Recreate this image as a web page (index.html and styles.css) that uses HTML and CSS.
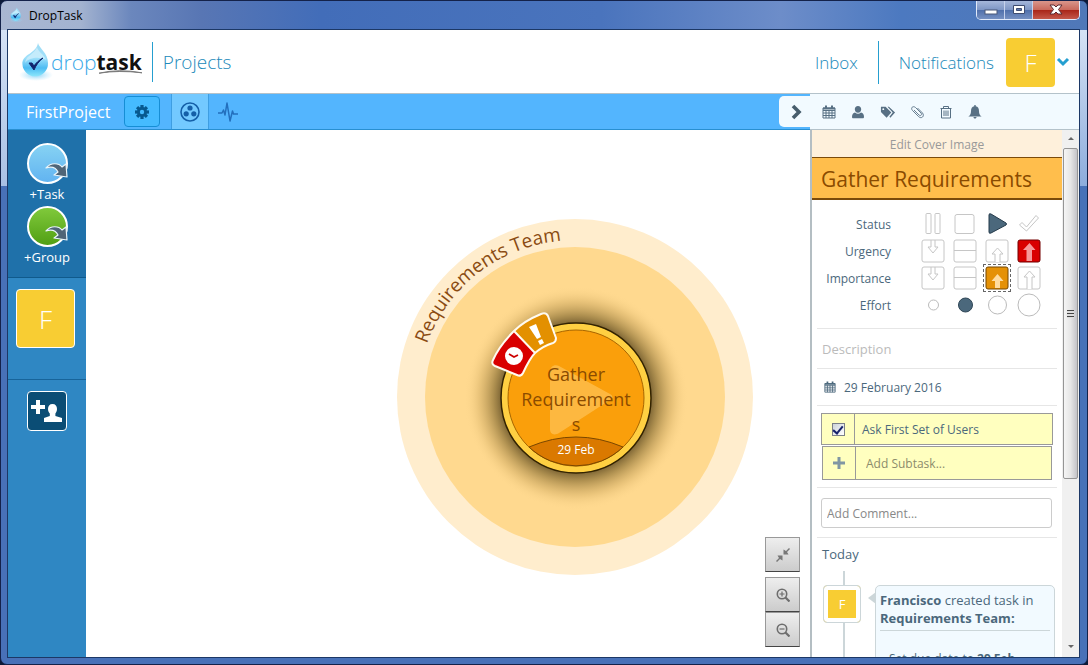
FILE: index.html
```html
<!DOCTYPE html>
<html lang="en">
<head>
<meta charset="utf-8">
<title>DropTask</title>
<link rel="stylesheet" href="styles.css">
</head>
<body>
<svg class="defs" width="0" height="0" aria-hidden="true">
  <defs>
    <linearGradient id="dropFill" x1="0" y1="0" x2="0" y2="1"><stop offset="0" stop-color="#9fdcf5"/><stop offset=".45" stop-color="#9fe0fa"/><stop offset=".75" stop-color="#4dbcf3"/><stop offset="1" stop-color="#8be6fb"/></linearGradient>
    <radialGradient id="glow"><stop offset="0" stop-color="#6fc8f5" stop-opacity=".8"/><stop offset="1" stop-color="#9fdcf8" stop-opacity="0"/></radialGradient>
    <symbol id="drop" viewBox="0 0 34 40">
      <ellipse cx="17" cy="33" rx="17" ry="6" fill="url(#glow)"/>
      <path d="M19 1c1 5 10 10 10 20a12.800 12.800 0 0 1-25.600 1C3 12 17 12 19 1z" fill="url(#dropFill)"/>
      <path d="M18 5c-2 7-11 8-12 16 5-7 17-6 21-3C25 12 19 10 18 5z" fill="#fff" opacity=".4"/>
      <path d="M10 21l5 7c2-5 5-9 9-12-4 2-7 5-9 8l-2-3z" fill="#10246e" stroke="#10246e"/>
    </symbol>
    <symbol id="calendar" viewBox="0 0 14 14"><path d="M1 3h12v10H1zM1 5.500h12M1 8h12M1 10.500h12M4 5v8M7 5v8M10 5v8" fill="none" stroke="currentColor"/><path d="M1 2.500h12v2H1zM3 .5h2v3H3zM9 .5h2v3H9z" fill="currentColor"/></symbol>
    <symbol id="person" viewBox="0 0 14 14"><path d="M7 1c2 0 3.200 1.400 3.200 3.200C10.200 6 9 7.800 7 7.800S3.800 6 3.800 4.200C3.800 2.400 5 1 7 1zM4 7.500c2 1.600 4 1.600 6 0 2 .3 3 2 3 4.500 0 .8-.5 1.300-1.300 1.300H2.300C1.500 13.300 1 12.800 1 12c0-2.500 1-4.200 3-4.500z" fill="currentColor"/></symbol>
    <symbol id="plus" viewBox="0 0 12 12"><path d="M4.500 0h3v4.500H12v3H7.500V12h-3V7.500H0v-3h4.500z" fill="currentColor"/></symbol>
    <symbol id="drag" viewBox="0 0 24 16"><path d="M1 6C6 0 14 1 17 5l4-3 1 13-13-2 4-3C11 6 7 4 1 6z" fill="#4f6577" stroke="#e8f4fa" stroke-width="1.200" stroke-linejoin="round"/></symbol>
    <symbol id="down" viewBox="0 0 24 24"><rect x="1" y="1" width="22" height="22" rx="2" fill="#fff" stroke="#c6c6c6"/><path d="M10 1v7H7l5 6 5-6h-3V1" fill="none" stroke="#c6c6c6"/></symbol>
    <symbol id="level" viewBox="0 0 24 24"><rect x="1" y="1" width="22" height="22" rx="2" fill="#fff" stroke="#c6c6c6"/><path d="M1 11.500h22" stroke="#c6c6c6"/></symbol>
  </defs>
</svg>
<div class="window">
  <div class="titlebar">
    <svg class="app-icon" viewBox="0 0 34 40"><use href="#drop"/></svg>
    <span class="app-name">DropTask</span>
    <div class="window-buttons">
      <button class="wb" aria-label="Minimize"><svg width="14" height="12"><rect x="1" y="6" width="12" height="4" fill="#fff" stroke="#4b5878"/></svg></button>
      <button class="wb" aria-label="Maximize"><svg width="14" height="12"><path d="M1.500 1.500h11v8h-11z" fill="#fff" stroke="#3e4c70"/><path d="M4.500 4.500h5v2h-5z" fill="#5b76ad" stroke="#3e4c70"/></svg></button>
      <button class="wb close" aria-label="Close"><svg width="14" height="12" viewBox="0 0 14 12"><path d="M1 1h4l2 2 2-2h4L9.500 5.500 13 10H9L7 8l-2 2H1l3.500-4.500z" fill="#fff" stroke="#5b2a32"/></svg></button>
    </div>
  </div>
  <div class="client">
    <header class="header">
      <svg class="drop-logo" viewBox="0 0 34 40"><use href="#drop"/></svg>
      <div class="wordmark"><span>drop</span><b>task</b><svg class="swoosh" viewBox="0 0 44 5" preserveAspectRatio="none"><path d="M0 4Q20-2 44 3.500Q20 0 0 4z" fill="#666" stroke="#777"/></svg></div>
      <span class="rule"></span>
      <a class="nav projects" href="#">Projects</a>
      <span class="grow"></span>
      <a class="nav" href="#">Inbox</a>
      <span class="rule rule-tall"></span>
      <a class="nav" href="#">Notifications</a>
      <button class="avatar-menu"><span class="avatar avatar-head">F</span><svg class="chev" width="14" height="10" viewBox="0 0 14 10"><path d="M2 2l5 5 5-5" fill="none" stroke="#259fd0" stroke-width="3"/></svg></button>
    </header>
    <div class="bars">
      <div class="project-bar">
        <span class="project-name">FirstProject</span>
        <button class="gear" aria-label="Project settings"><svg width="16" height="16" viewBox="-8 -8 16 16" fill="#07598f"><g><rect x="-1.600" y="-7" width="3.200" height="14"/><rect x="-7" y="-1.600" width="14" height="3.200"/><rect x="-1.600" y="-7" width="3.200" height="14" transform="rotate(45)"/><rect x="-1.600" y="-7" width="3.200" height="14" transform="rotate(-45)"/></g><circle r="5"/><circle r="2.200" fill="#45bbff"/></svg></button>
        <button class="view active" aria-label="Circles view"><svg width="22" height="22" viewBox="0 0 22 22" fill="#145fa8"><circle cx="11" cy="11" r="9" fill="none" stroke="#145fa8" stroke-width="1.600"/><circle cx="11" cy="7" r="2.600"/><circle cx="7.200" cy="12.800" r="2.600"/><circle cx="14.800" cy="12.800" r="2.600"/></svg></button>
        <button class="view" aria-label="Activity"><svg width="20" height="20" viewBox="0 0 20 20" fill="none" stroke="#236fbd" stroke-width="1.500" stroke-linejoin="round"><path d="M0 11h4l1.500-3 1.500 5L9 1l3 18 2.500-10 1 3H20"/></svg></button>
        <button class="collapse" aria-label="Collapse panel"><svg width="12" height="16" viewBox="0 0 12 16"><path d="M2 2l6 6-6 6" fill="none" stroke="#475d6c" stroke-width="3.600"/></svg></button>
      </div>
      <div class="task-tools">
        <button aria-label="Due date"><svg><use href="#calendar"/></svg></button>
        <button aria-label="Assign"><svg><use href="#person"/></svg></button>
        <button class="tags" aria-label="Tags"><svg viewBox="0 0 17 14"><path d="M1 1.500h5L12 7.500 7 13 1 7zM8 1.500h1.500L16 7.500 11 13l-1-1L13.500 7.500z" fill="currentColor"/><circle cx="3.500" cy="4" r="1" fill="#f2faff"/></svg></button>
        <button aria-label="Attach"><svg viewBox="0 0 14 14"><path d="M4 5l5 5c1.500 1.500 3.500-.3 2-2L5.500 2.500C3 .3.200 3 2.500 5.500l6 6c3 3 6.500-.5 4-3.500L7.500 3" fill="none" stroke="currentColor" stroke-width=".9"/></svg></button>
        <button aria-label="Delete"><svg viewBox="0 0 14 14"><path d="M1.500 3.500h11M2.500 3.500V13h9V3.500M4.500 3V1.500h5V3M5 5.500v5.500M7 5.500v5.500M9 5.500v5.500" fill="none" stroke="currentColor"/></svg></button>
        <button aria-label="Reminder"><svg viewBox="0 0 14 14"><path d="M6.300 0h1.400v1.300C10 1.800 11 3.500 11 6c0 3 1 4.500 2.700 5.500H.3C2 10.500 3 9 3 6c0-2.500 1-4.200 3.300-4.700zM5.500 12h3c0 2-3 2-3 0z" fill="currentColor"/></svg></button>
      </div>
    </div>
    <div class="main">
      <aside class="sidebar">
        <div class="create">
          <button class="new"><span class="ball blue"></span><svg class="drag"><use href="#drag"/></svg><span>+Task</span></button>
          <button class="new"><span class="ball green"></span><svg class="drag"><use href="#drag"/></svg><span>+Group</span></button>
        </div>
        <div class="members"><span class="avatar avatar-side">F</span></div>
        <div class="invite"><button class="invite-btn" aria-label="Invite member"><svg width="32" height="26" viewBox="0 0 32 26" fill="#fff"><path d="M5 2h4v5h5v4H9v5H5v-5H0V7h5zM21.500 6c3 0 4.500 2 4.500 5 0 2-1 3.500-1.600 4.500v2.500l6.600 2v4H13v-4l5.800-2v-2.500C18 14.500 17 13 17 11c0-3 1.500-5 4.500-5z"/></svg></button></div>
      </aside>
      <main class="canvas">
        <svg class="group" width="356" height="356" viewBox="0 0 356 356">
          <defs>
            <path id="arc" d="M30 125A156 156 0 0 1 322 120"/>
            <radialGradient id="shade" cx="179" cy="179" r="112" gradientUnits="userSpaceOnUse"><stop offset=".64" stop-color="#403010" stop-opacity=".8"/><stop offset=".74" stop-color="#70571f" stop-opacity=".56"/><stop offset=".87" stop-color="#ab853c" stop-opacity=".24"/><stop offset="1" stop-color="#ffd88e" stop-opacity="0"/></radialGradient>
          </defs>
          <circle cx="178" cy="178" r="178" fill="#ffedcd"/>
          <circle cx="178" cy="178" r="150" fill="#ffd98f"/>
          <circle cx="179" cy="179" r="112" fill="url(#shade)"/>
          <text class="group-name"><textPath href="#arc">Requirements Team</textPath></text>
          <circle cx="179" cy="179" r="75" fill="#ffd042" stroke="#332300" stroke-width="1.500"/>
          <circle cx="179" cy="179" r="68" fill="#fa9f0b" stroke="#a86500"/>
          <path d="M132 228Q179 208 226 228A68 68 0 0 1 132 228z" fill="#da7900" stroke="#7a4700"/>
          <path d="M153 153c0-5 4-8 9-6l51 28q5 3 0 6l-51 33c-5 3-9 1-9-4z" fill="#ffc65d" opacity=".65"/>
          <text class="task-name" x="179" y="162">Gather</text>
          <text class="task-name" x="179" y="187">Requirement</text>
          <text class="task-name" x="179" y="212">s</text>
          <text class="task-date" x="179" y="235">29 Feb</text>
          <path d="M117 112L138 134Q133 139 126 154Q124 158 120 156L98 147Q94 145 96 141Q102 127 117 112z" fill="#d90000"/>
          <path d="M117 112Q127 102 144 95Q149 93 151 97L159 119Q159 123 156 124Q146 127 138 134z" fill="#e39000"/>
          <path d="M117 112L138 134M117 112Q127 102 144 95Q149 93 151 97L159 119Q159 123 156 124Q146 127 138 134Q133 139 126 154Q124 158 120 156L98 147Q94 145 96 141Q102 127 117 112z" fill="none" stroke="#fffaf0" stroke-width="2" stroke-linejoin="round"/>
          <circle cx="117" cy="137" r="9" fill="#fff"/><path d="M112 135l5 3 4-2" fill="none" stroke="#c00" stroke-width="1.800"/>
          <path d="M132 108l7-3 5 13-4 2zM141 122l4-2 2 4-4 2z" fill="#fff"/>
        </svg>
        <div class="zoom">
          <button aria-label="Fit"><svg viewBox="0 0 14 14" fill="#777"><path d="M13 0l1 1-3 3 1.500 2.500H7.500V1.500L10 3zM1 14l-1-1 3-3L1.500 7.500H6.500V12.500L4 11z"/></svg></button>
          <button class="zin" aria-label="Zoom in"><svg viewBox="0 0 14 14" fill="none" stroke="#6d6d6d"><circle cx="6" cy="6" r="4.700" stroke-width="1.600"/><path d="M9.500 9.500l4 4" stroke-width="2.200"/><path d="M3.500 6h5M6 3.500v5" stroke-width="1.200"/></svg></button>
          <button aria-label="Zoom out"><svg viewBox="0 0 14 14" fill="none" stroke="#6d6d6d"><circle cx="6" cy="6" r="4.700" stroke-width="1.600"/><path d="M9.500 9.500l4 4" stroke-width="2.200"/><path d="M3.500 6h5" stroke-width="1.200"/></svg></button>
        </div>
      </main>
      <section class="panel">
        <div class="details">
          <button class="cover">Edit Cover Image</button>
          <h1 class="title">Gather Requirements</h1>
          <div class="ratings">
            <span class="label">Status</span>
            <button aria-label="Paused"><svg viewBox="0 0 24 24" fill="#fff" stroke="#c6c6c6"><rect x="5" y="1.500" width="5" height="20" rx="1"/><rect x="14" y="1.500" width="5" height="20" rx="1"/></svg></button>
            <button aria-label="Not started"><svg viewBox="0 0 24 24"><rect x="2" y="2.500" width="19" height="19" rx="2" fill="#fff" stroke="#c6c6c6"/></svg></button>
            <button aria-label="In progress" aria-pressed="true"><svg viewBox="0 0 24 24"><path d="M4 3q0-2 2-1l15 9q1 1 0 2L6 21q-2 1-2-1z" fill="#4b687c" stroke="#253b4b"/></svg></button>
            <button aria-label="Done"><svg viewBox="0 0 24 24"><path d="M2.500 13l2.500-2.500 4.500 4.500L19 3.500 21.500 6 9.500 19z" fill="#fff" stroke="#c6c6c6"/></svg></button>
            <span class="label">Urgency</span>
            <button aria-label="Urgency low"><svg><use href="#down"/></svg></button>
            <button aria-label="Urgency normal"><svg><use href="#level"/></svg></button>
            <button aria-label="Urgency high"><svg viewBox="0 0 24 24" fill="#fff" stroke="#c6c6c6"><rect x="1" y="1" width="22" height="22" rx="2"/><path d="M10 23v-8H7l5.500-6 5.500 6h-3v8"/></svg></button>
            <button aria-label="Urgency critical" aria-pressed="true"><svg viewBox="0 0 24 24"><rect x="1" y="1" width="22" height="22" rx="2" fill="#d90000" stroke="#740000"/><path d="M9.500 22v-11H6l6.500-7 6 7H15v11z" fill="#f6999a"/></svg></button>
            <span class="label">Importance</span>
            <button aria-label="Importance low"><svg><use href="#down"/></svg></button>
            <button aria-label="Importance normal"><svg><use href="#level"/></svg></button>
            <button class="focused" aria-label="Importance high" aria-pressed="true"><svg viewBox="0 0 24 24"><rect x="1" y="1" width="22" height="22" rx="2" fill="#e59106" stroke="#754600"/><path d="M10 22v-7H6.500l6-7 6 7H15v7z" fill="#ffdca0"/></svg></button>
            <button aria-label="Importance critical"><svg viewBox="0 0 24 24" fill="#fff" stroke="#c6c6c6"><rect x="1" y="1" width="22" height="22" rx="2"/><path d="M10 23v-12H7l5.500-6 5.500 6h-3v12"/></svg></button>
            <span class="label">Effort</span>
            <button aria-label="Small"><svg viewBox="0 0 24 24"><circle cx="12.500" cy="12" r="5" fill="#fff" stroke="#bbb"/></svg></button>
            <button aria-label="Medium" aria-pressed="true"><svg viewBox="0 0 24 24"><circle cx="12.500" cy="12" r="7" fill="#4b687c" stroke="#2f4656"/></svg></button>
            <button aria-label="Large"><svg viewBox="0 0 24 24"><circle cx="12.500" cy="12" r="9" fill="#fff" stroke="#bbb"/></svg></button>
            <button aria-label="Extra large"><svg viewBox="0 0 24 24"><circle cx="12" cy="12" r="11" fill="#fff" stroke="#bbb"/></svg></button>
          </div>
          <div class="row desc"><input aria-label="Description" placeholder="Description"></div>
          <div class="row date"><svg><use href="#calendar"/></svg><span>29 February 2016</span></div>
          <div class="subtasks">
            <div class="subtask"><span class="cell"><input id="s1" type="checkbox" checked></span><label for="s1">Ask First Set of Users</label></div>
            <div class="subtask add"><button class="cell" aria-label="Add subtask"><svg width="12" height="12"><use href="#plus"/></svg></button><input aria-label="New subtask" placeholder="Add Subtask..."></div>
          </div>
          <div class="comment"><input aria-label="Comment" placeholder="Add Comment..."></div>
          <h2 class="today">Today</h2>
          <div class="feed">
            <div class="line"><span class="avatar avatar-feed">F</span></div>
            <article class="bubble"><p class="head"><b>Francisco</b> created task in <b>Requirements Team:</b></p><p class="more">Set due date to <b>29 Feb</b></p></article>
          </div>
        </div>
        <div class="scrollbar" aria-hidden="true"><span class="arrow up"></span><span class="thumb"><i></i></span><span class="arrow dn"></span></div>
      </section>
    </div>
  </div>
</div>
</body>
</html>
```
FILE: styles.css
```css
* { box-sizing: border-box; }
body { margin: 0; font-family: "Open Sans", "Noto Sans", sans-serif; font-size: 12px; color: #4b687c; background: #0c1a38; }
button { font: inherit; color: inherit; background: none; border: 0; padding: 0; margin: 0; }
input { font: inherit; color: inherit; min-width: 0; }
h1, h2, p { margin: 0; font-weight: 400; }
a { text-decoration: none; }
svg { display: block; flex: none; }
.defs { position: absolute; }

.window { height: 100vh; display: flex; flex-direction: column; padding: 0 7px 6px 6px; border: 1px solid #14224a; border-radius: 7px; overflow: hidden;
  background: linear-gradient(#d5e2f5, #a9c0e4) left 29px / 7px 156px no-repeat, linear-gradient(#d5e2f5, #8dacdc) right 29px / 7px 156px no-repeat, linear-gradient(90deg, #a9b7d2 0, #a3b3d0 80px, #6b87bd 130px, #5876b4 200px, #426db9 320px, #4a74bd 600px, #6d8dc9 780px, #4c79c0 900px, #5078b8) top / 100% 29px no-repeat, #4871b8; }
.titlebar { height: 28px; flex: none; display: flex; align-items: center; gap: 5px; padding-left: 1px; }
.app-icon { width: 16px; height: 16px; }
.app-name { flex: 1; font-size: 12px; color: #000; }
.window-buttons { align-self: flex-start; display: flex; height: 19px; border: 1px solid #e2eafa; border-top: 0; border-radius: 0 0 5px 5px; overflow: hidden; }
.wb { width: 28px; display: grid; place-items: center; border-right: 1px solid #c6d2ec; background: linear-gradient(#a5b7da, #7d95c4 50%, #4f6fab 50%, #7590c2); }
.wb.close { width: 46px; border: 0; background: linear-gradient(#d9968b, #c9685b 50%, #a82418 50%, #c4584a); }

.client { flex: 1; min-height: 0; display: flex; flex-direction: column; border: 1px solid #1c3866; background: #fff; overflow: hidden; }
.header { height: 64px; flex: none; display: flex; align-items: center; padding: 1px 9px 0 11px; border-bottom: 1px solid #b4c2ca; }
.drop-logo { width: 34px; height: 40px; }
.wordmark { position: relative; margin-left: -2px; font: 300 21px "Open Sans", sans-serif; color: #38a8e8; }
.wordmark b { font-weight: 700; color: #111; }
.swoosh { position: absolute; right: 0; bottom: 2px; width: 43px; height: 4px; }
.rule { width: 1px; height: 40px; background: #259fd0; margin: 0 10px; }
.rule-tall { height: 43px; margin: 0 20px; }
.grow { flex: 1; }
.nav { font-size: 17px; font-weight: 300; color: #2189ba; }
.projects { font-size: 19px; }
.avatar-menu { display: flex; align-items: center; margin-left: 12px; gap: 1px; }
.avatar { display: grid; place-items: center; background: #f8cd33; color: #fff; border-radius: 4px; }
.avatar-head { width: 49px; height: 49px; font-size: 24px; font-weight: 300; }

.bars { height: 36px; flex: none; display: flex; }
.project-bar { flex: 1; display: flex; align-items: center; padding-left: 18px; background: #53b5fe; border-bottom: 1px solid #288fd1; }
.project-name { font-size: 16px; color: #fff; margin-right: 14px; }
.gear { width: 36px; height: 31px; display: grid; place-items: center; margin-right: 11px; background: #45bbff; border: 1px solid #168ed5; border-radius: 4px; }
.view { width: 38px; height: 35px; display: grid; place-items: center; }
.view.active { background: #73c9ff; border: solid #3e9ee2; border-width: 0 1px; }
.collapse { margin-left: auto; width: 31px; height: 31px; padding-left: 12px; background: #f2faff; border-radius: 5px 0 0 5px; }
.task-tools { width: 269px; display: flex; align-items: center; gap: 15px; padding-left: 12px; background: #f2faff; border-bottom: 1px solid #b4c2ca; color: #587084; }
.task-tools svg { width: 14px; height: 14px; }
.task-tools .tags { margin-right: -1px; }
.task-tools .tags svg { width: 16px; }

.main { flex: 1; min-height: 0; display: flex; }
.sidebar { width: 78px; flex: none; background: #2f87c3; color: #fff; }
.create { height: 148px; padding-top: 11px; background: #1f71aa; border-bottom: 1px solid #105a8c; }
.new { position: relative; display: block; width: 100%; height: 63px; font-size: 13px; line-height: 18px; }
.ball { display: block; width: 41px; height: 41px; margin: 0 auto 1px 19px; border: 2px solid #fff; border-radius: 50%; }
.blue { background: linear-gradient(#86d2f3, #62b4f1); }
.green { background: linear-gradient(#80c93b, #519f14); }
.drag { position: absolute; left: 37px; top: 21px; width: 24px; height: 16px; }
.members { height: 101px; padding: 11px 8px; }
.avatar-side { width: 59px; height: 59px; border: 1px solid #fff; font-size: 26px; font-weight: 300; }
.invite { border-top: 1px solid #17649a; padding: 11px 19px; }
.invite-btn { width: 40px; height: 40px; display: grid; place-items: center; background: #0b4d75; border: 1px solid #fff; border-radius: 4px; }

.canvas { position: relative; flex: 1; background: #fff; }
.group { position: absolute; left: 311px; top: 89px; }
.group-name { font-size: 19px; fill: #8a4b12; }
.task-name { font-size: 18px; fill: #8a4b00; text-anchor: middle; }
.task-date { font-size: 12px; fill: #fff; text-anchor: middle; }
.zoom { position: absolute; right: 10px; bottom: 10px; display: flex; flex-direction: column; }
.zoom button { width: 35px; height: 35px; display: grid; place-items: center; background: linear-gradient(#eee, #ccc); border: 1px solid #999; border-bottom-color: #444; }
.zoom .zin { margin-top: 5px; }
.zoom svg { width: 14px; height: 14px; }

.panel { width: 269px; flex: none; display: flex; border-left: 2px solid #b4bec3; background: #fff; overflow: hidden; }
.details { flex: 1; min-width: 0; overflow: hidden; }
.cover { display: block; width: 100%; height: 27px; padding-top: 2px; background: #fef0db; color: #999; font-size: 12px; }
.title { height: 43px; padding-left: 9px; font-size: 21px; line-height: 42px; color: #8a4b00; background: #ffbe4c; border-top: 1px solid #7b4b0a; border-bottom: 2px solid #7b4b0a; }
.ratings { display: grid; grid-template-columns: 79px 46px repeat(3, 24px); grid-auto-rows: 24px; gap: 3px 8px; padding: 12px 0 0; height: 128px; }
.ratings .label { align-self: center; text-align: right; font-size: 12px; }
.ratings .label + button { margin-left: 22px; }
.ratings svg { width: 24px; height: 24px; }
.focused { outline: 1px dashed #666; outline-offset: 1px; }
.row, .subtasks, .comment { margin: 0 5px; padding: 0 5px; border-top: 1px solid #e6e6e6; }
.row { display: flex; align-items: center; }
.desc { height: 40px; }
.desc input { flex: 1; border: 0; padding: 0; font-size: 13px; background: none; }
.desc input::placeholder { color: #bbb; }
.date { height: 37px; gap: 8px; padding-left: 7px; }
.date svg { width: 12px; height: 12px; }
.subtasks { padding: 7px 4px; height: 82px; }
.subtask { height: 32px; display: flex; background: #ffffbf; border: 1px solid #999; }
.subtask label { padding-left: 7px; align-self: center; }
.cell { width: 33px; display: grid; place-items: center; border-right: 1px solid #999; color: #8096a3; }
.cell input { appearance: none; width: 13px; height: 13px; margin: 0; border: 1px solid #7b8088; background: linear-gradient(135deg, #cdd3da, #fff); display: grid; place-items: center; }
.cell input:checked::after { content: ""; width: 4px; height: 8px; margin-bottom: 2px; border: solid #17226b; border-width: 0 2px 2px 0; transform: rotate(40deg); }
.add { height: 34px; margin: 1px 1px 0; }
.add > input { flex: 1; border: 0; background: none; padding: 0 0 0 10px; }
.add > input::placeholder { color: #8c8c6c; }
.comment { height: 51px; padding: 10px 5px 0 4px; border-bottom: 1px solid #e6e6e6; }
.comment input { width: 100%; height: 30px; border: 1px solid #ccc; border-radius: 3px; padding: 0 5px; }
.comment input::placeholder { color: #888; }
.today { padding-left: 10px; font-size: 13px; line-height: 33px; }
.feed { display: flex; height: 120px; }
.line { width: 38px; margin-left: 11px; padding-top: 14px; background: linear-gradient(#ccd6d9, #ccd6d9) 20px 0 / 2px 100% no-repeat; }
.avatar-feed { width: 38px; height: 38px; border: 1px solid #ccd6d9; box-shadow: inset 0 0 0 4px #fff; font-size: 13px; }
.bubble { position: relative; flex: 1; margin: 14px 7px 0 14px; padding: 5px 4px; background: #f2faff; border: 1px solid #ccd6d9; border-radius: 5px; font-size: 13px; line-height: 18px; }
.bubble::before { content: ""; position: absolute; left: -8px; top: 6px; border: solid transparent; border-width: 6px 8px 6px 0; border-right-color: #ccd6d9; }
.head { padding-bottom: 3px; border-bottom: 1px solid #ccd6d9; }
.more { padding: 19px 9px 0; font-size: 12px; }
.scrollbar { width: 17px; flex: none; display: flex; flex-direction: column; align-items: center; background: #f0f0f0; }
.arrow { width: 0; height: 0; border: 3px solid transparent; }
.up { margin: 4px 0 8px; border-bottom-color: #666; }
.dn { margin: auto 0 6px; border-top-color: #666; }
.thumb { width: 15px; height: 331px; flex: none; display: grid; place-items: center; border: 1px solid #959595; border-radius: 2px; background: linear-gradient(90deg, #f5f5f5, #e6e6e6 50%, #c3c3c8); }
.thumb i { width: 7px; height: 8px; background: repeating-linear-gradient(#444 0 1px, #ddd 1px 3px); }
```
